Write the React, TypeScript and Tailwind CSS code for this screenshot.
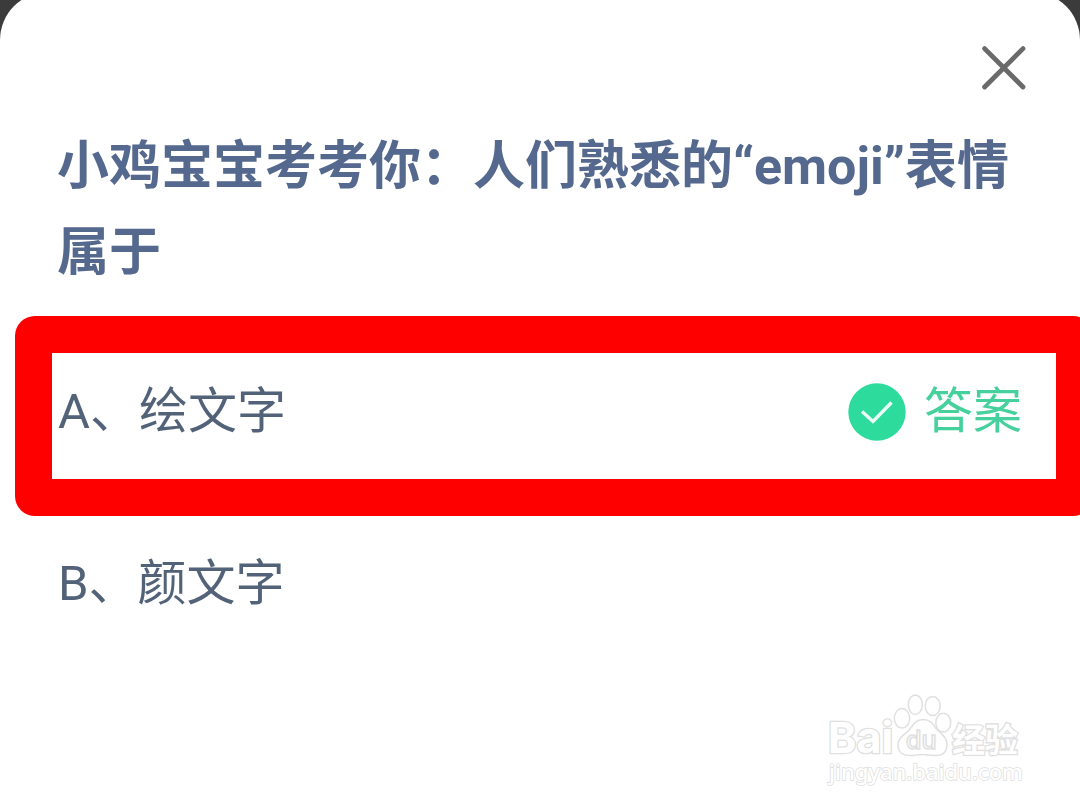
const options = [
  { key: 'A', text: '绘文字', correct: true },
  { key: 'B', text: '颜文字', correct: false },
]

function CloseIcon() {
  return (
    <svg viewBox="0 0 44 44" className="size-11" fill="none" stroke="#6a6a6a" strokeWidth="4.8" strokeLinecap="round">
      <path d="M2.6 2.6 41 41M41 2.6 2.6 41" />
    </svg>
  )
}

function CheckIcon() {
  return (
    <svg viewBox="0 0 58 58" className="size-[58px]">
      <circle cx="29" cy="29" r="28.7" fill="#2ddc9c" />
      <path d="M14 28.5 25 38.5 43.5 19.5" fill="none" stroke="#eafff6" strokeWidth="3.4" />
    </svg>
  )
}

function Watermark() {
  return (
    <svg
      viewBox="0 0 200 104"
      className="h-[104px] w-[200px]"
      fill="#ffffff"
      stroke="#e0e0e0"
      strokeWidth="1.5"
      role="img"
      aria-label="Baidu 经验"
    >
      <text x="2" y="60" fontSize="43" fontFamily="Inter, sans-serif" fontWeight="700" strokeWidth="2.6" paintOrder="stroke">
        Bai
      </text>
      <ellipse cx="76" cy="25.3" rx="7.7" ry="9.8" />
      <ellipse cx="89.3" cy="11.7" rx="7" ry="9.8" />
      <ellipse cx="106.7" cy="13" rx="7.5" ry="9.6" />
      <ellipse cx="117.3" cy="29.7" rx="7.5" ry="9.4" />
      <path d="M97 26.5c-7 0-10 5-13 9.5-4 5-12 8-12 16 0 7 5 10.5 12 10.5 5 0 9-1 13-1s8 1 13 1c7 0 11-4 11-10.5 0-9-7-11.5-11-16.5-3-5-6-9-13-9Z" />
      <text x="80" y="56" fontSize="25" fontFamily="Inter, sans-serif" fontWeight="500">
        du
      </text>
      <text
        x="126"
        y="59"
        fontSize="33"
        fontFamily="'Noto Sans CJK SC', sans-serif"
        fontWeight="700"
        strokeWidth="2.6"
        paintOrder="stroke"
      >
        经验
      </text>
      <text x="3" y="87" fontSize="22" fontFamily="'Noto Sans', sans-serif" fontWeight="500" strokeWidth="1.6" paintOrder="stroke">
        jingyan.baidu.com
      </text>
    </svg>
  )
}

export default function App() {
  return (
    <div className="min-h-screen overflow-hidden bg-[#3b3b3b] font-[Roboto,'Noto_Sans_CJK_SC',sans-serif]">
      <main className="relative -mt-2 flex min-h-[calc(100vh+8px)] flex-col rounded-t-[48px] bg-white pt-[54px]">
        <div className="flex justify-end pr-[54px]">
          <button type="button" aria-label="关闭">
            <CloseIcon />
          </button>
        </div>

        <h1 className="mt-[34px] px-[57px] text-[52px] leading-[86px] font-bold text-[#55698f]">
          小鸡宝宝考考你：人们熟悉的“emoji”表情属于
        </h1>

        {/* Options */}
        <div className="mt-5 flex flex-col text-[49px]">
          {options.map((option) => (
            <button
              key={option.key}
              type="button"
              className={
                option.correct
                  ? '-mr-[13px] ml-[15px] flex h-[200px] items-center justify-between rounded-[20px] border-[37px] border-[#ff0000] pr-[34px] pb-2 pl-1.5 text-left text-[#526278]'
                  : 'mt-5 flex h-24 items-center px-[58px] text-left text-[#526278]'
              }
            >
              <span>{option.key}、{option.text}</span>
              {option.correct && (
                <span className="flex items-center gap-[18px] text-[#45d09c]">
                  <CheckIcon />
                  答案
                </span>
              )}
            </button>
          ))}
        </div>

        <div className="mt-auto flex justify-end pr-[54px] pb-[13px]">
          <Watermark />
        </div>
      </main>
    </div>
  )
}
